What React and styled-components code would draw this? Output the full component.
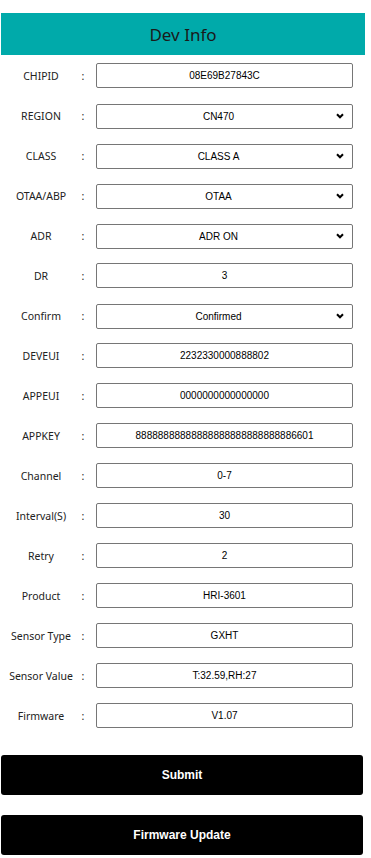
import React from "react";
import styled, { createGlobalStyle } from "styled-components";

const Global = createGlobalStyle`
  html, body { margin: 0; padding: 0; background: #fff; }
  body { font-family: "Noto Sans", "Open Sans", sans-serif; color: #222; }
`;

const Page = styled.div`
  width: 371px;
  padding-top: 13px;
`;

const Header = styled.div`
  margin-left: 1px;
  width: 364px;
  height: 42px;
  background: #00aaaa;
  display: flex;
  align-items: center;
  justify-content: center;
  font-family: "Noto Sans", sans-serif;
  font-size: 17px;
  color: #1a1a1a;
`;

const Form = styled.div`
  display: flex;
  flex-direction: column;
  gap: 15px;
  padding-top: 8px;
`;

const Row = styled.div`
  display: grid;
  grid-template-columns: 80px 4px 257px;
  align-items: center;
  height: 25px;
  padding-left: 1px;
`;

const Label = styled.div`
  text-align: center;
  font-size: 10.5px;
  color: #222;
  white-space: nowrap;
`;

const Colon = styled.div`
  text-align: center;
  font-size: 10.5px;
  color: #222;
`;

const fieldCss = `
  box-sizing: border-box;
  width: 257px;
  height: 25px;
  margin-left: 11px;
  border: 1px solid #767676;
  border-radius: 2px;
  background: #fff;
  font-family: "Liberation Sans", Arial, sans-serif;
  font-size: 10px;
  color: #000;
  text-align: center;
  outline: none;
`;

const Input = styled.input`
  ${fieldCss}
  padding: 0 2px;
`;

const SelectWrap = styled.div`
  position: relative;
  width: 257px;
  height: 25px;
  margin-left: 11px;
`;

const Select = styled.select`
  ${fieldCss}
  margin-left: 0;
  appearance: none;
  -webkit-appearance: none;
  padding: 0 16px 0 4px;
  text-align-last: center;
`;

const Chevron = styled.svg`
  position: absolute;
  right: 9px;
  top: 10px;
  width: 8px;
  height: 6px;
  pointer-events: none;
`;

const Buttons = styled.div`
  display: flex;
  flex-direction: column;
  gap: 20px;
  margin-top: 27px;
  padding-left: 1px;
`;

const Button = styled.button`
  width: 362px;
  height: 40px;
  border: none;
  border-radius: 3px;
  background: #000;
  color: #fff;
  font-family: "Liberation Sans", Arial, sans-serif;
  font-weight: bold;
  font-size: 12px;
`;

const fields = [
  { label: "CHIPID", value: "08E69B27843C" },
  { label: "REGION", value: "CN470", select: true },
  { label: "CLASS", value: "CLASS A", select: true },
  { label: "OTAA/ABP", value: "OTAA", select: true },
  { label: "ADR", value: "ADR ON", select: true },
  { label: "DR", value: "3" },
  { label: "Confirm", value: "Confirmed", select: true },
  { label: "DEVEUI", value: "2232330000888802" },
  { label: "APPEUI", value: "0000000000000000" },
  { label: "APPKEY", value: "88888888888888888888888888886601" },
  { label: "Channel", value: "0-7" },
  { label: "Interval(S)", value: "30" },
  { label: "Retry", value: "2" },
  { label: "Product", value: "HRI-3601" },
  { label: "Sensor Type", value: "GXHT" },
  { label: "Sensor Value", value: "T:32.59,RH:27" },
  { label: "Firmware", value: "V1.07" },
];

export default function App() {
  return (
    <Page>
      <Global />
      <Header>Dev Info</Header>
      <Form>
        {fields.map((f) => (
          <Row key={f.label}>
            <Label>{f.label}</Label>
            <Colon>:</Colon>
            {f.select ? (
              <SelectWrap>
                <Select defaultValue={f.value}>
                  <option value={f.value}>{f.value}</option>
                </Select>
                <Chevron viewBox="0 0 8 6">
                  <path d="M1 1.2 L4 4.3 L7 1.2" fill="none" stroke="#000" strokeWidth="2" />
                </Chevron>
              </SelectWrap>
            ) : (
              <Input defaultValue={f.value} />
            )}
          </Row>
        ))}
      </Form>
      <Buttons>
        <Button>Submit</Button>
        <Button>Firmware Update</Button>
      </Buttons>
    </Page>
  );
}
